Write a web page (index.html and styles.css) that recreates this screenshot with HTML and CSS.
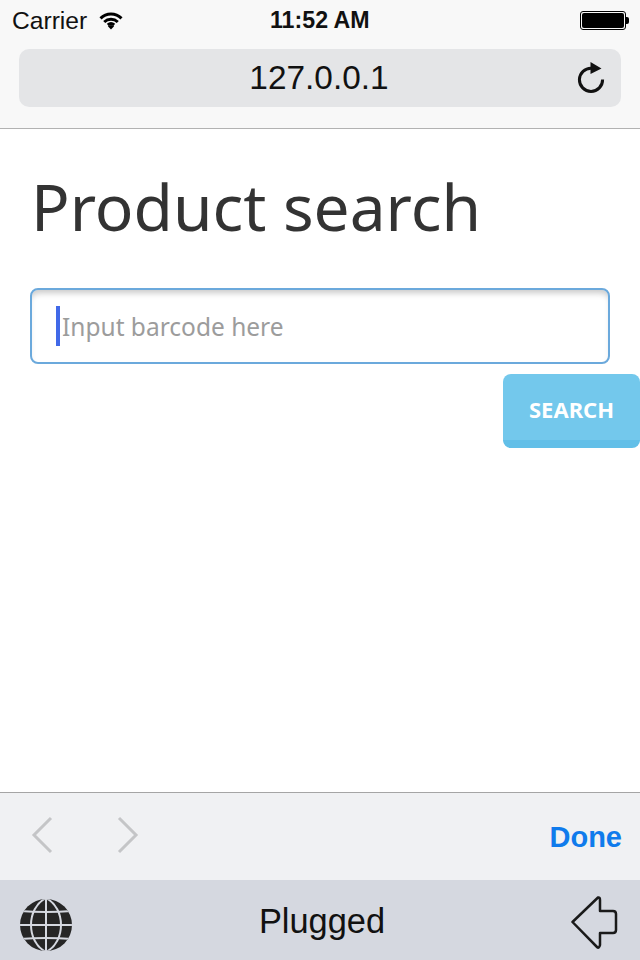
FILE: index.html
```html
<!DOCTYPE html>
<html lang="en">
<head>
  <meta charset="UTF-8" />
  <meta name="viewport" content="width=device-width, initial-scale=1.0"/>
  <title>Product search</title>
  <link rel="stylesheet" href="styles.css">
</head>
<body>
  <div class="phone">
    <header class="browser-bar">
      <div class="status-bar">
        <div class="status-left">
          <span>Carrier</span>
          <svg class="wifi" width="24" height="18" viewBox="0 0 24 18">
            <path d="M1.5 6.4 A15 15 0 0 1 22.5 6.4" />
            <path d="M5.2 10 A10 10 0 0 1 18.8 10" />
            <path d="M8.8 13 A5 5 0 0 1 15.2 13" />
            <polygon class="wifi-tip" points="12,17.5 8.9,14.2 12,12.9 15.1,14.2" />
          </svg>
        </div>
        <div class="status-time">11:52 AM</div>
        <div class="battery">
          <div class="battery-body"><div class="battery-fill"></div></div>
          <div class="battery-cap"></div>
        </div>
      </div>
      <div class="url-bar">
        <span class="url-text">127.0.0.1</span>
        <svg class="reload" width="30" height="32" viewBox="0 0 30 32">
          <path class="reload-arc" d="M15.5 7.2 A11.6 11.6 0 1 0 26.6 18.5" />
          <polygon points="14.5,1 25.5,7.4 14.5,13" />
        </svg>
      </div>
    </header>

    <main class="content">
      <h1>Product search</h1>
      <div class="search-field">
        <input type="text" placeholder="Input barcode here">
        <div class="caret"></div>
      </div>
      <div class="actions">
        <button class="search-btn">SEARCH</button>
      </div>
    </main>

    <div class="form-toolbar">
      <div class="nav-arrows">
        <svg width="22" height="38" viewBox="0 0 22 38"><path d="M20 2 L3 19 L20 36" /></svg>
        <svg width="22" height="38" viewBox="0 0 22 38"><path d="M2 2 L19 19 L2 36" /></svg>
      </div>
      <span class="done">Done</span>
    </div>

    <footer class="keyboard-bar">
      <svg class="globe" width="54" height="54" viewBox="0 0 54 54">
        <defs>
          <clipPath id="globe-clip"><circle cx="27" cy="27" r="26" /></clipPath>
        </defs>
        <circle class="globe-ball" cx="27" cy="27" r="26" />
        <g class="globe-lines" clip-path="url(#globe-clip)">
          <path d="M0 27 H54" />
          <path d="M0 13 Q27 15 54 13" />
          <path d="M0 41 Q27 39 54 41" />
          <path d="M27 0 V54" />
          <path d="M27 0 C7 10 7 44 27 54" />
          <path d="M27 0 C47 10 47 44 27 54" />
        </g>
      </svg>
      <span class="keyboard-name">Plugged</span>
      <svg class="backspace" width="48" height="54" viewBox="0 0 48 54">
        <path d="M1.5 26 L27 1.5 Q29 1 29 4 L29 15 L42 15 Q45 15 45 18 L45 34 Q45 37 42 37 L29 37 L29 49 Q28 53 26 51 Z" />
      </svg>
    </footer>
  </div>
</body>
</html>
```

FILE: styles.css
```css
* {
  margin: 0;
  padding: 0;
  box-sizing: border-box;
}

body {
  font-family: 'Liberation Sans', Arial, sans-serif;
  background: #ffffff;
  color: #000000;
}

.phone {
  width: 640px;
  height: 960px;
  display: flex;
  flex-direction: column;
  overflow: hidden;
}

/* Safari top bar */
.browser-bar {
  height: 129px;
  background: #f8f8f8;
  border-bottom: 1px solid #b2b2b2;
  padding: 0 19px 0 12px;
}

.status-bar {
  height: 41px;
  display: flex;
  align-items: center;
  position: relative;
  font-size: 24.6px;
  color: #111111;
}

.status-left {
  display: flex;
  align-items: center;
  gap: 12px;
}

.wifi path {
  fill: none;
  stroke: #000000;
  stroke-width: 3;
}

.wifi-tip {
  fill: #000000;
}

.status-time {
  position: absolute;
  left: 258px;
  font-size: 23.2px;
  font-weight: 700;
}

.battery {
  margin-left: auto;
  margin-right: -8px;
  display: flex;
  align-items: center;
}

.battery-body {
  width: 46px;
  height: 19px;
  border: 1px solid #000000;
  border-radius: 3px;
  padding: 1px;
}

.battery-fill {
  height: 100%;
  background: #000000;
  border-radius: 2px;
}

.battery-cap {
  width: 3px;
  height: 7px;
  background: #000000;
  border-radius: 0 2px 2px 0;
}

.url-bar {
  margin: 8px 0 0 7px;
  height: 58px;
  background: #e4e5e7;
  border-radius: 10px;
  display: flex;
  align-items: center;
  justify-content: center;
  position: relative;
}

.url-text {
  font-size: 33.4px;
  color: #111111;
  margin-right: 2px;
}

.reload {
  position: absolute;
  right: 15px;
  top: 12px;
}

.reload-arc {
  fill: none;
  stroke: #111111;
  stroke-width: 3;
}

.reload polygon {
  fill: #111111;
}

/* Page content */
.content {
  flex: 1;
  background: #ffffff;
  padding: 0 0 0 30px;
}

h1 {
  font-family: 'Noto Sans', sans-serif;
  font-size: 64px;
  font-weight: 400;
  line-height: 80px;
  color: #333333;
  margin: 38px 0 0 1px;
}

.search-field {
  position: relative;
  width: 580px;
  height: 76px;
  margin-top: 41px;
}

.search-field input {
  width: 100%;
  height: 100%;
  border: 2px solid #6ba9dc;
  border-radius: 8px;
  outline: none;
  padding: 0 30px;
  font-family: 'Noto Sans', sans-serif;
  font-size: 24.5px;
  color: #333333;
  box-shadow: inset 0 6px 6px -3px rgba(0, 0, 0, 0.22);
}

.search-field input::placeholder {
  color: #9c9c9c;
  opacity: 1;
}

.caret {
  position: absolute;
  left: 26px;
  top: 18px;
  width: 4px;
  height: 40px;
  background: #4169e8;
}

.actions {
  display: flex;
  justify-content: flex-end;
  margin-top: 10px;
}

.search-btn {
  width: 137px;
  height: 74px;
  padding-top: 4px;
  background: #73c8ec;
  border: none;
  border-bottom: 8px solid #62bfe8;
  border-radius: 8px;
  color: #ffffff;
  font-family: 'Noto Sans', sans-serif;
  font-size: 22px;
  font-weight: 700;
}

/* Form accessory toolbar */
.form-toolbar {
  height: 88px;
  background: #f0f1f3;
  border-top: 1px solid #a5a5a5;
  display: flex;
  align-items: center;
  justify-content: space-between;
  padding: 0 18px 0 31px;
}

.nav-arrows {
  display: flex;
  gap: 64px;
  margin-bottom: 3px;
}

.nav-arrows path {
  fill: none;
  stroke: #c4c5c7;
  stroke-width: 3;
}

.done {
  font-size: 29px;
  font-weight: 700;
  color: #0f7bec;
  margin-top: 2px;
}

/* Keyboard bar */
.keyboard-bar {
  height: 80px;
  background: #d5d8e0;
  display: flex;
  align-items: center;
  justify-content: space-between;
  padding: 10px 21px 0 19px;
}

.keyboard-name {
  font-size: 34.4px;
  color: #111111;
  margin-bottom: 8px;
}

.globe-ball {
  fill: #262626;
}

.globe-lines path {
  fill: none;
  stroke: #d5d8e0;
  stroke-width: 2;
}

.backspace {
  margin-bottom: 5px;
}

.backspace path {
  fill: none;
  stroke: #1a1a1a;
  stroke-width: 2.5;
  stroke-linejoin: round;
}
```
